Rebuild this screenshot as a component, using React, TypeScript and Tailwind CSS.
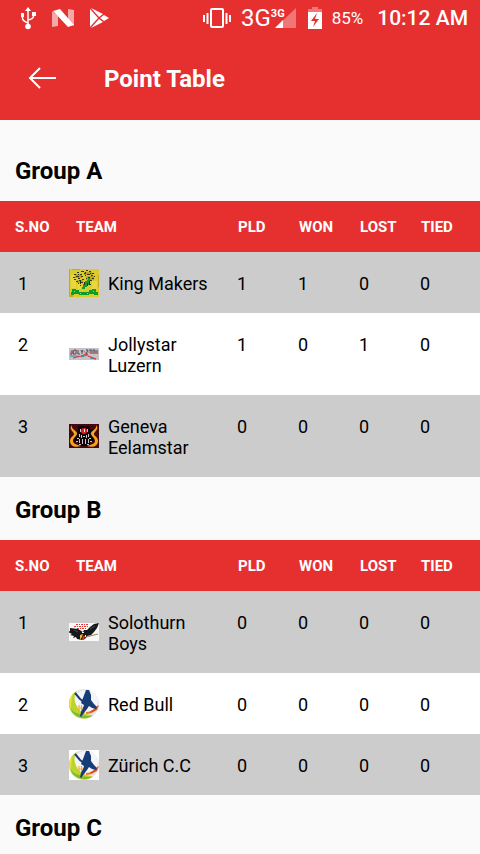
import type { ReactNode } from "react";

type Team = { name: string; logo: ReactNode; pld: number; won: number; lost: number; tied: number };
type Group = { name: string; teams: Team[] };

function KingMakersLogo() {
  return (
    <svg width="30" height="28" viewBox="0 0 30 28" shapeRendering="crispEdges" aria-hidden="true">
      <path fill="#dccb28" d="M0 0h30v28H0z" />
      <path fill="#e8d840" d="M2 6h5v13H2zM23 12h5v8h-5zM8 15h4v5H8z" />
      <path fill="#c9a822" d="M0 0h1v28H0zM29 6h1v12h-1zM3 0h8v1H3zM0 26h4v2H0z" />
      <path fill="#b5a52a" d="M6 5h7v4H6zM15 3h8v3h-8zM17 7h8v4h-8zM8 11h6v3H8z" />
      <path
        stroke="#34351a"
        strokeWidth="1"
        fill="none"
        d="M5 5.500h2M8 3.500h2M12 2.500h3M17 1.500h2M20 2.500h2M23 4.500h2M4 8.500h2M7 7.500h3M11 5.500h2M15 4.500h2M18 5.500h3M22 6.500h2M25 7.500h1M5 10.500h2M9 9.500h2M12 7.500h2M16 6.500h1M19 8.500h2M23 9.500h2M7 12.500h2M10 11.500h1M13 10.500h2M17 9.500h1M21 11.500h2M9 14.500h1M12 13.500h2M11 16.500h1M14 15.500h1M20 15.500h2M9 5.500h1M21 4.500h1M16 3.500h1"
      />
      <path fill="#189c28" d="M19 9h2v4h-1v3h-2v2h-2v2h-3v-2h1v-3h2v-3h2v-1h1z" />
      <path fill="#2c3519" d="M11 11h1v4h-1zM15 13h1v3h-1zM18 14h1v3h-1zM20 12h1v3h-1z" />
      <path fill="#0d9b2c" d="M3 20h4v1h3v2h10v-2h3v-1h4v3h2v3h-4v-1h-5v1H10v-1H5v1H2v-3h1z" />
      <path fill="#d8cc2d" d="M5 22h1v1H5zM24 22h1v1h-1zM11 24h1v1h-1zM18 24h1v1h-1z" />
    </svg>
  );
}

function JollystarLogo() {
  return (
    <svg width="30" height="12" viewBox="0 0 30 12" aria-hidden="true">
      <path fill="#c5c4c2" d="M0 0h30v12H0z" />
      <path
        fill="none"
        stroke="#4f4868"
        strokeWidth="1"
        d="M3 2v4H1M5 2h2v4H4zM9 2v4h2M12 2l1 2 1-2M13 4v2M17 2h2l-2 4h2M20 2h3M22 2v4M24 6V2h2v4M28 2v4"
      />
      <path fill="none" stroke="#d84548" strokeWidth=".8" d="M1 4h3M7 2l2 4M15 3l2 3M19 4h4M24 4h5" />
      <path fill="none" stroke="#3d82b5" strokeWidth="1" d="M1 8h8M12 9l7-2M21 10l6 1" />
      <path fill="none" stroke="#d5393c" strokeWidth="1.2" d="M4 10l8-2 6-2M19 8l8 3" />
    </svg>
  );
}

function GenevaLogo() {
  return (
    <svg width="30" height="24" viewBox="0 0 30 24" aria-hidden="true">
      <path fill="#45080c" d="M0 0h30v24H0z" />
      <path fill="#100409" d="M9 2h12v3h4v13h-4v4H9v-4H5V8h4z" />
      <path fill="#f4a51b" d="M3 1C1 5 9 7 8 10c-1 3-4 4-4 7 0 3 5 4 8 5-6 2-11 0-11-5 0-4 4-5 4-7C5 8-1 5 3 1z" />
      <path fill="#f4a51b" d="M27 1c2 4-6 6-5 9 1 3 4 4 4 7 0 3-5 4-8 5 6 2 11 0 11-5 0-4-4-5-4-7 0-2 6-5 2-9z" />
      <circle cx="15" cy="7" r="3" fill="#dc1d26" />
      <path fill="#ece7e7" d="M15 5h1v3h-1z" />
      <g shapeRendering="crispEdges" fill="#c9c7c8">
        <path d="M11 5h1v3h-1zM18 5h1v3h-1zM10 10h1v3h-1zM19 10h1v3h-1zM8 14h2v1H8zM20 14h2v1h-2zM12 11h1v3h-1zM17 11h1v3h-1zM7 17h2v1H7zM10 15h1v4h-1zM13 15h1v5h-1zM16 15h1v5h-1zM19 15h1v4h-1zM21 17h2v1h-2zM10 20h2v1h-2zM18 20h2v1h-2zM14 12h2v1h-2z" />
      </g>
    </svg>
  );
}

function SolothurnLogo() {
  return (
    <svg width="30" height="18" viewBox="0 0 30 18" aria-hidden="true">
      <path fill="#faf8f6" d="M0 0h30v18H0z" />
      <path
        fill="none"
        stroke="#e73434"
        strokeWidth="1"
        strokeDasharray="2 1 1 1"
        d="M7 1.500h12M5 3.500h14M8 5.500h10"
      />
      <path stroke="#a98364" strokeWidth="1.2" d="M17 14l12-3" />
      <path
        fill="#15191c"
        d="M1 5l8 1 5 3 1-2 3 0 3-3 4-3 5-1-2 5-3 4-3 3-4 1-2 3-3 1-5-1-1-2-3 1 1-2-4-1 2-1-4-2 2-1z"
      />
      <path stroke="#536168" strokeWidth=".7" d="M21 6l5-3M5 7l4 2" />
      <path fill="#efb52b" d="M11 12l3-1-1 3-2 3z" />
      <path fill="#dd3a28" d="M14 13h2l-1 4h-2z" />
      <path fill="#eee" d="M13 9h2v1h-2zM16 12h1v2h-1z" />
    </svg>
  );
}

function CricketLogo({ framed = false }: { framed?: boolean }) {
  return (
    <svg width="30" height="30" viewBox="0 0 30 30" aria-hidden="true">
      {framed && <path fill="#fff" d="M0 0h30v30H0z" />}
      <circle cx="15" cy="15" r="15" fill="#e4e5e8" />
      <circle cx="17" cy="13" r="12" fill="#f5f5f7" />
      <path fill="#b9d52f" d="M8 2C-1 6-2 19 4 25c6 6 15 6 20 1-7 0-12-2-15-7C5 13 4 7 8 2z" />
      <path fill="#7dbb35" d="M3 23c5 6 13 8 20 4-5 0-9 0-13-2-4-1-7-3-8-6z" />
      <path fill="#e9dd3b" d="M4 5C0 9-1 15 1 20c2-2 1-9 3-15z" />
      <path stroke="#f5ad2c" strokeWidth="1.2" d="M10 16v6M12.500 16v7M10 19h6M15 20v5" />
      <path fill="#f07827" d="M17 23c5 0 8-3 12-7l1 1c-3 5-7 8-13 8z" />
      <path fill="#df4a27" d="M22 22c3-1 4-3 7-4l-1 3-7 3z" />
      <path fill="none" stroke="#173c76" strokeWidth="2" d="M6 4l5 6 4 3" />
      <path
        fill="#173c76"
        d="M17 1h3l2 5v5l3 4 3 3-1 2-4-1-3-2-2 3-3 4-3 4-1-1 1-4 2-4 1-3-3-2 2-5z"
      />
    </svg>
  );
}

const groups: Group[] = [
  {
    name: "Group A",
    teams: [
      { name: "King Makers", logo: <KingMakersLogo />, pld: 1, won: 1, lost: 0, tied: 0 },
      { name: "Jollystar Luzern", logo: <JollystarLogo />, pld: 1, won: 0, lost: 1, tied: 0 },
      { name: "Geneva Eelamstar", logo: <GenevaLogo />, pld: 0, won: 0, lost: 0, tied: 0 },
    ],
  },
  {
    name: "Group B",
    teams: [
      { name: "Solothurn Boys", logo: <SolothurnLogo />, pld: 0, won: 0, lost: 0, tied: 0 },
      { name: "Red Bull", logo: <CricketLogo />, pld: 0, won: 0, lost: 0, tied: 0 },
      { name: "Zürich C.C", logo: <CricketLogo framed />, pld: 0, won: 0, lost: 0, tied: 0 },
    ],
  },
  { name: "Group C", teams: [] },
];

function StatusBar() {
  return (
    <div className="flex h-9 items-center justify-between pr-3 pl-5">
      <div className="flex items-center gap-4">
        <svg width="16" height="24" viewBox="0 0 16 24" fill="none" stroke="#fff" strokeWidth="1.5" aria-label="USB">
          <path d="M8 3v17M2.500 9v3q0 3 5.500 5M13.500 8v2q0 3-5.500 4" />
          <path fill="#fff" stroke="none" d="M8 1l3 4H5zM1 7h3v4H1zM12 6h4v4h-4z" />
          <circle cx="8" cy="20.500" r="2.800" fill="#fff" stroke="none" />
        </svg>
        <svg width="22" height="18" viewBox="0 0 22 18" aria-label="Android">
          <path fill="#f4a8a8" d="M0 2l6 5v10l-6 1zM16 0l6 1v16l-6-4z" />
          <path fill="#fff" d="M1 2l7-2 14 16-6 2z" />
        </svg>
        <svg width="20" height="20" viewBox="0 0 20 20" fill="#fff" aria-label="Play">
          <path d="M0 1l8 9-8 9zM1 0l12 6-4 3zM1 20l8-9 4 3zM10 10l4-3 5 3-5 3z" />
        </svg>
      </div>
      <div className="flex items-center text-white">
        <svg width="28" height="22" viewBox="0 0 28 22" fill="none" stroke="#fff" strokeWidth="2" aria-label="Vibrate">
          <rect x="8" y="2" width="12" height="18" rx="1" />
          <path d="M1 8v7M4.500 6v11M23.500 6v11M27 8v7" />
        </svg>
        <span className="ml-2.5 text-2xl leading-9">3G</span>
        <div className="flex h-5 items-start">
          <span className="text-[11px] leading-[11px] font-bold">3G</span>
          <svg className="-ml-2.5" width="21" height="20" viewBox="0 0 21 20" aria-label="Signal">
            <path fill="#f07776" d="M21 0v20H0z" />
            <path fill="#fff" d="M8 12v8H0z" />
          </svg>
        </div>
        <svg className="ml-3" width="14" height="22" viewBox="0 0 14 22" aria-label="Charging">
          <path fill="#f07776" d="M4 0h6v2h4v3H0V2h4z" />
          <path fill="#fff" d="M0 5h14v17H0z" />
          <path fill="#e63030" d="M9 6l-6 8h4l-2 6 6-8H7z" />
        </svg>
        <span className="ml-2.5 text-[17px] leading-9">85%</span>
        <span className="ml-3.5 text-[21px] leading-9 font-medium">10:12 AM</span>
      </div>
    </div>
  );
}

function GroupTable({ group }: { group: Group }) {
  return (
    <section>
      <h2 className="px-[15px] pt-[19px] pb-4 text-2xl leading-7 font-bold">{group.name}</h2>
      {group.teams.length > 0 && (
        <table className="w-full table-fixed text-left" aria-label={group.name}>
          <colgroup>
            <col className="w-[61px]" />
            <col />
            <col className="w-[61px]" />
            <col className="w-[61px]" />
            <col className="w-[61px]" />
            <col className="w-[74px]" />
          </colgroup>
          <thead className="bg-[#e63030] text-[15px] leading-[21px] text-white">
            <tr>
              {["S.NO", "TEAM", "PLD", "WON", "LOST", "TIED"].map((label) => (
                <th key={label} scope="col" className="pt-4 pb-3.5 pl-[15px] font-bold">
                  {label}
                </th>
              ))}
            </tr>
          </thead>
          <tbody className="text-lg leading-[21px]">
            {group.teams.map((team, i) => (
              <tr key={team.name} className="align-top odd:bg-[#cccccc] even:bg-white">
                <td className="pt-[21px] pb-[19px] pl-[18px]">{i + 1}</td>
                <td className="pr-3 pl-2 align-middle">
                  <div className="flex items-center gap-[9px]">
                    <span className="w-[30px] shrink-0">{team.logo}</span>
                    <span className="pt-[21px] pb-[19px]">{team.name}</span>
                  </div>
                </td>
                {[team.pld, team.won, team.lost, team.tied].map((value, column) => (
                  <td key={column} className="pt-[21px] pb-[19px] pl-3.5">
                    {value}
                  </td>
                ))}
              </tr>
            ))}
          </tbody>
        </table>
      )}
    </section>
  );
}

export default function App() {
  return (
    <div className="flex h-screen flex-col bg-[#fafafa] font-[Roboto,sans-serif] text-black [&_svg]:block">
      <header className="shrink-0 bg-[#e63030] text-white">
        <StatusBar />
        <div className="flex h-[84px] items-center pl-7">
          <button type="button" aria-label="Back" className="mr-12">
            <svg width="28" height="22" viewBox="0 0 28 22" fill="none" stroke="#fff" strokeWidth="2">
              <path d="M12 1L2 11l10 10M2 11h27" />
            </svg>
          </button>
          <h1 className="pt-0.5 text-2xl font-bold">Point Table</h1>
        </div>
      </header>
      <main className="min-h-0 flex-1 overflow-y-auto pt-[18px] [scrollbar-width:none]">
        {groups.map((group) => (
          <GroupTable key={group.name} group={group} />
        ))}
      </main>
    </div>
  );
}
